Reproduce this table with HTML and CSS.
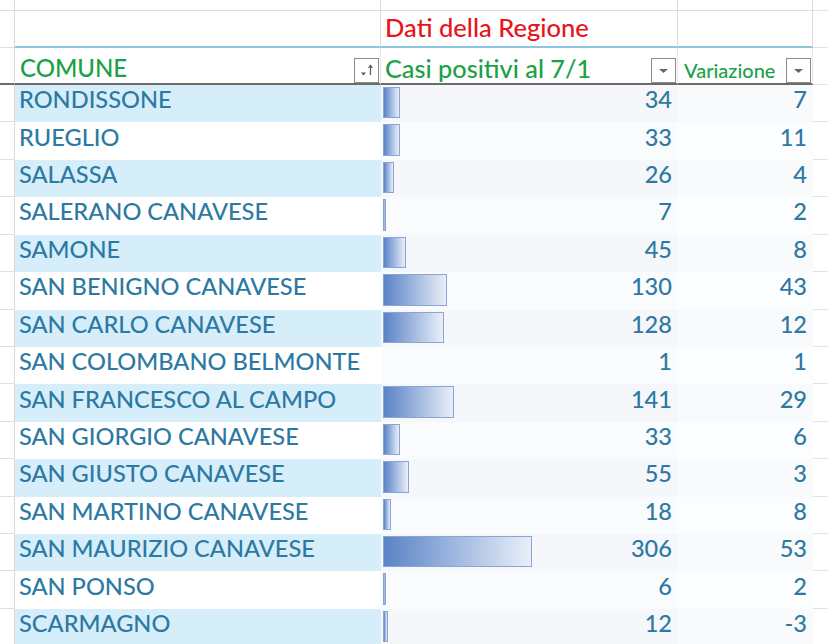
FILE: index.html
```html
<!DOCTYPE html>
<html lang="it">
<head>
<meta charset="utf-8">
<title>Casi positivi</title>
<link rel="stylesheet" href="styles.css">
</head>
<body>
<div class="sheet">
  <!-- top row -->
  <div class="c gut top"></div>
  <div class="c top gl"></div>
  <div class="c top gl"></div>
  <div class="c top gl"></div>
  <div class="c top dcol"></div>

  <!-- title row -->
  <div class="c gut title"></div>
  <div class="c title gl"></div>
  <div class="c title gl"><span class="red">Dati della Regione</span></div>
  <div class="c title gl"></div>
  <div class="c title dcol"></div>

  <!-- header row -->
  <div class="c gut head"></div>
  <div class="c head hd gl"><span class="green comune">COMUNE</span>
    <span class="fbtn"><svg width="23" height="23" viewBox="0 0 23 23"><path d="M6 13.5h5l-2.5 3z" fill="#555"/><path d="M15.5 16V6.5M13.5 9l2-2.5 2 2.5" stroke="#555" stroke-width="1.2" fill="none"/></svg></span>
  </div>
  <div class="c head hd gl"><span class="green">Casi positivi al 7/1</span>
    <span class="fbtn"><svg width="23" height="23" viewBox="0 0 23 23"><path d="M7 10h9l-4.5 4z" fill="#666"/></svg></span>
  </div>
  <div class="c head hd gl"><span class="green small">Variazione</span>
    <span class="fbtn"><svg width="23" height="23" viewBox="0 0 23 23"><path d="M7 10h9l-4.5 4z" fill="#666"/></svg></span>
  </div>
  <div class="c head dcol"></div>
</div>

<div class="sheet data">
  <div class="c gut"></div><div class="c a odd">RONDISSONE</div><div class="c b odd"><span class="bar" style="width:17px"></span><span class="num">34</span></div><div class="c v odd">7</div><div class="c dcol"></div>
  <div class="c gut"></div><div class="c a">RUEGLIO</div><div class="c b"><span class="bar" style="width:17px"></span><span class="num">33</span></div><div class="c v">11</div><div class="c dcol"></div>
  <div class="c gut"></div><div class="c a odd">SALASSA</div><div class="c b odd"><span class="bar" style="width:11px"></span><span class="num">26</span></div><div class="c v odd">4</div><div class="c dcol"></div>
  <div class="c gut"></div><div class="c a">SALERANO CANAVESE</div><div class="c b"><span class="bar" style="width:3px"></span><span class="num">7</span></div><div class="c v">2</div><div class="c dcol"></div>
  <div class="c gut"></div><div class="c a odd">SAMONE</div><div class="c b odd"><span class="bar" style="width:23px"></span><span class="num">45</span></div><div class="c v odd">8</div><div class="c dcol"></div>
  <div class="c gut"></div><div class="c a">SAN BENIGNO CANAVESE</div><div class="c b"><span class="bar" style="width:64px"></span><span class="num">130</span></div><div class="c v">43</div><div class="c dcol"></div>
  <div class="c gut"></div><div class="c a odd">SAN CARLO CANAVESE</div><div class="c b odd"><span class="bar" style="width:61px"></span><span class="num">128</span></div><div class="c v odd">12</div><div class="c dcol"></div>
  <div class="c gut"></div><div class="c a">SAN COLOMBANO BELMONTE</div><div class="c b"><span class="num">1</span></div><div class="c v">1</div><div class="c dcol"></div>
  <div class="c gut"></div><div class="c a odd">SAN FRANCESCO AL CAMPO</div><div class="c b odd"><span class="bar" style="width:71px"></span><span class="num">141</span></div><div class="c v odd">29</div><div class="c dcol"></div>
  <div class="c gut"></div><div class="c a">SAN GIORGIO CANAVESE</div><div class="c b"><span class="bar" style="width:17px"></span><span class="num">33</span></div><div class="c v">6</div><div class="c dcol"></div>
  <div class="c gut"></div><div class="c a odd">SAN GIUSTO CANAVESE</div><div class="c b odd"><span class="bar" style="width:26px"></span><span class="num">55</span></div><div class="c v odd">3</div><div class="c dcol"></div>
  <div class="c gut"></div><div class="c a">SAN MARTINO CANAVESE</div><div class="c b"><span class="bar" style="width:8px"></span><span class="num">18</span></div><div class="c v">8</div><div class="c dcol"></div>
  <div class="c gut"></div><div class="c a odd">SAN MAURIZIO CANAVESE</div><div class="c b odd"><span class="bar" style="width:149px"></span><span class="num">306</span></div><div class="c v odd">53</div><div class="c dcol"></div>
  <div class="c gut"></div><div class="c a">SAN PONSO</div><div class="c b"><span class="bar" style="width:3px"></span><span class="num">6</span></div><div class="c v">2</div><div class="c dcol"></div>
  <div class="c gut"></div><div class="c a odd">SCARMAGNO</div><div class="c b odd"><span class="bar" style="width:5px"></span><span class="num">12</span></div><div class="c v odd">-3</div><div class="c dcol"></div>
</div>
</body>
</html>
```

FILE: styles.css
```css
html, body {
  margin: 0;
  padding: 0;
  background: #ffffff;
  overflow: hidden;
}
body {
  font-family: Lato, "Liberation Sans", sans-serif;
  font-weight: 500;
  width: 828px;
  height: 644px;
}
.sheet {
  display: grid;
  grid-template-columns: 15px 366px 297px 135px 1fr;
  grid-template-rows: 11px 37px 37px;
}
.sheet.data {
  grid-template-rows: none;
  grid-auto-rows: 37.43px;
}
.c {
  box-sizing: border-box;
  min-width: 0;
  display: flex;
  align-items: center;
  white-space: nowrap;
}
.gut {
  border-right: 1px solid #d9d9d9;
  border-bottom: 1px solid #dedede;
}
.top {
  border-bottom: 1px solid #dcdcdc;
}
.gl {
  border-right: 1px solid #dcdcdc;
}
.dcol {
  border-bottom: 1px solid #e2e2e2;
}
.title {
  border-bottom: 2px solid #8fc6df;
  padding: 0 5px 4px 4px;
}
.gut.title {
  border-bottom: 1px solid #dedede;
  padding: 0;
}
.title.dcol {
  border-bottom: 1px solid #e2e2e2;
}
.head {
  border-bottom: 2px solid #6b6b6b;
  padding: 0 1px 0 4px;
}
.gut.head {
  padding: 0;
}
.head.dcol {
  border-bottom: 1px solid #e2e2e2;
}
.gl.head {
  border-right-color: #e6e6e6;
}
.hd {
  justify-content: space-between;
}
.red {
  color: #e8141c;
  font-size: 25.5px;
}
.green {
  color: #1ba146;
  font-size: 25.3px;
  padding-top: 4px;
}
.green.comune {
  font-size: 24px;
  padding-left: 1px;
}
.green.small {
  font-size: 20px;
  padding-top: 8px;
  padding-left: 2px;
}
.fbtn {
  display: block;
  flex: none;
  width: 25px;
  height: 25px;
  box-sizing: border-box;
  border: 1px solid #8c8c8c;
  background: #fff;
  margin-top: 9px;
}
.fbtn svg {
  display: block;
}

/* data rows */
.data .c {
  color: #2c79a3;
  font-size: 23.6px;
}
.a {
  padding: 0 0 9px 4px;
  background: #ffffff;
}
.a.odd {
  background: #d6eef9;
}
.b {
  display: grid;
  background: #fafbfd;
  padding: 0 6px 0 2px;
}
.b.odd {
  background: #f5f7fa;
}
.b > * {
  grid-area: 1 / 1;
}
.bar {
  justify-self: start;
  align-self: stretch;
  margin: 2px 0 4px;
  box-sizing: border-box;
  border: 1px solid #8aa5d4;
  background: linear-gradient(to right, #5a83c6, #e9eff9);
}
.num {
  justify-self: end;
  align-self: center;
  padding-bottom: 9px;
}
.v {
  justify-content: flex-end;
  padding: 0 6px 9px 0;
  background: #fcfdfe;
}
.v.odd {
  background: #f9fafc;
}
```
